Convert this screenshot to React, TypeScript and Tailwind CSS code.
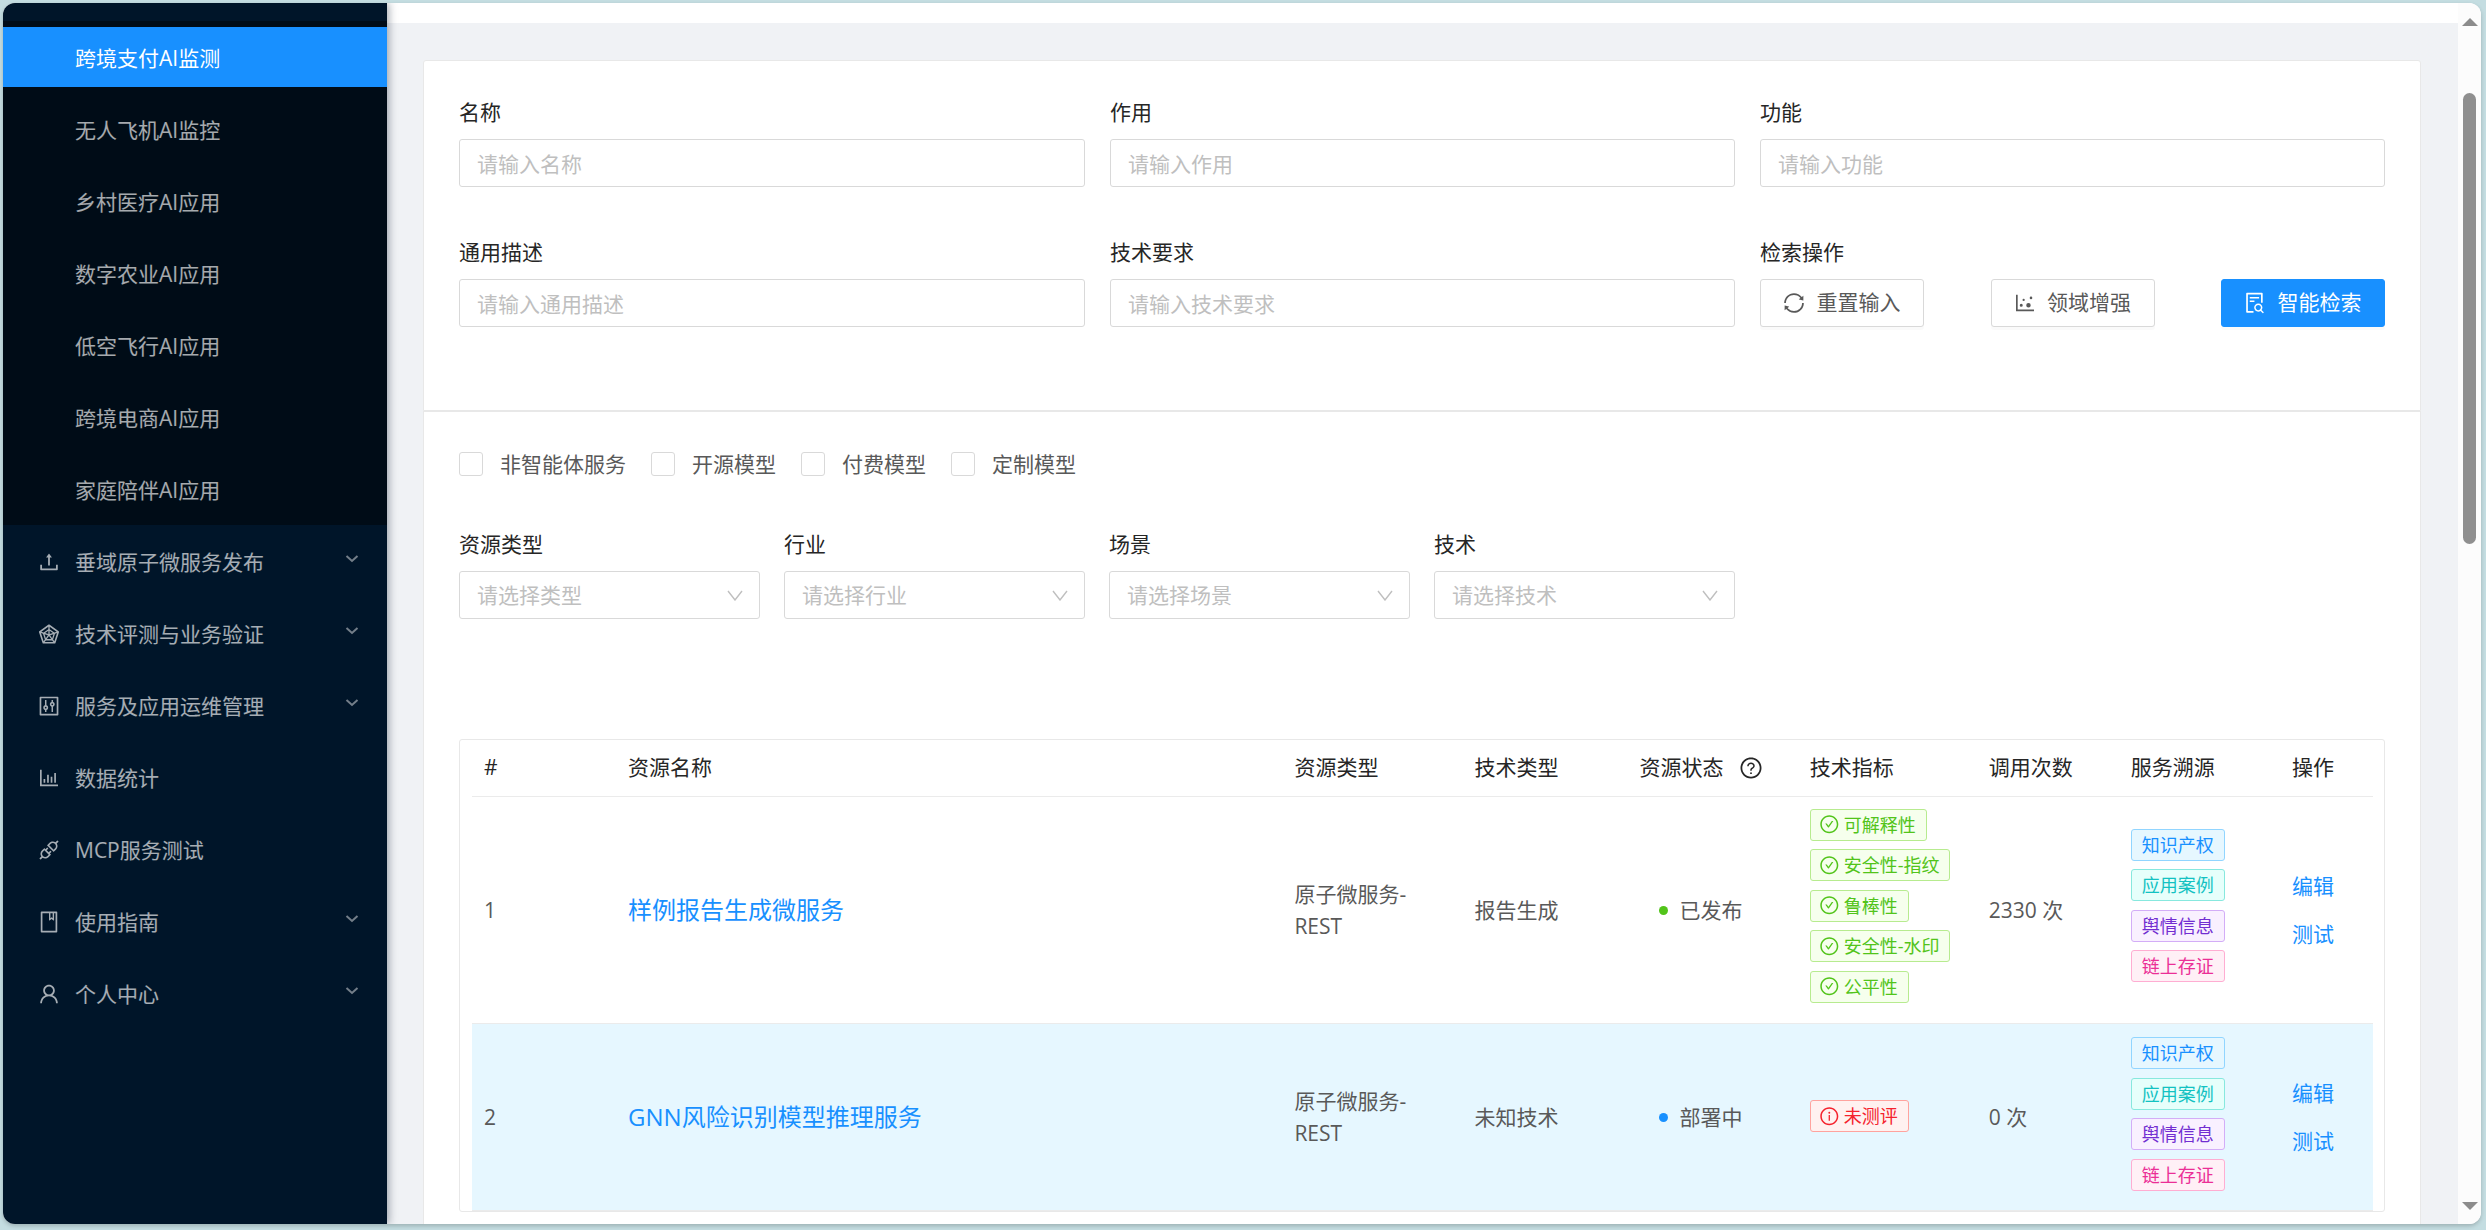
import React from "react";
import {
  AiOutlineUpload,
  AiOutlineRadarChart,
  AiOutlineControl,
  AiOutlineBarChart,
  AiOutlineApi,
  AiOutlineBook,
  AiOutlineUser,
  AiOutlineSync,
  AiOutlineDotChart,
  AiOutlineFileSearch,
  AiOutlineCheckCircle,
  AiOutlineInfoCircle,
  AiOutlineQuestionCircle,
} from "react-icons/ai";

const big = "-m-[1.5px] shrink-0";
const small = "-m-[1.3px] shrink-0";

const subItems = ["无人飞机AI监控", "乡村医疗AI应用", "数字农业AI应用", "低空飞行AI应用", "跨境电商AI应用", "家庭陪伴AI应用"];

const topItems: { label: string; icon: React.ReactNode; arrow: boolean }[] = [
  { label: "垂域原子微服务发布", icon: <AiOutlineUpload size={24} className={big} />, arrow: true },
  { label: "技术评测与业务验证", icon: <AiOutlineRadarChart size={24} className={big} />, arrow: true },
  { label: "服务及应用运维管理", icon: <AiOutlineControl size={24} className={big} />, arrow: true },
  { label: "数据统计", icon: <AiOutlineBarChart size={24} className={big} />, arrow: false },
  { label: "MCP服务测试", icon: <AiOutlineApi size={24} className={big} />, arrow: false },
  { label: "使用指南", icon: <AiOutlineBook size={24} className={big} />, arrow: true },
  { label: "个人中心", icon: <AiOutlineUser size={24} className={big} />, arrow: true },
];

function Chevron() {
  return (
    <svg width="14" height="8" viewBox="0 0 14 8" className="mb-[6px] text-white/45" fill="none" stroke="currentColor" strokeWidth="2">
      <path d="M1.5 1 L7 6 L12.5 1" />
    </svg>
  );
}

function Sidebar() {
  return (
    <aside className="relative z-10 flex h-full w-[384px] shrink-0 flex-col bg-[#001529] text-[21px] leading-[31px] text-white/65 shadow-[2px_0_8px_rgba(0,21,41,0.35)]">
      <div className="h-[18px] shrink-0" />
      <div className="flex flex-col gap-[12px] bg-[#000c17] pb-[6px] pt-[6px]">
        <div className="flex h-[60px] items-center bg-[#1890ff] pl-[72px] pt-[2px] text-white">跨境支付AI监测</div>
        {subItems.map((s) => (
          <div key={s} className="flex h-[60px] items-center pl-[72px] pt-[2px]">
            {s}
          </div>
        ))}
      </div>
      <div className="mt-[6px] flex flex-col gap-[12px]">
        {topItems.map((t) => (
          <div key={t.label} className="flex h-[60px] items-center pl-[35px] pr-[28px] pt-[2px]">
            <span className="mr-[16px] flex w-[21px] justify-center">{t.icon}</span>
            <span className="flex-1">{t.label}</span>
            {t.arrow && <Chevron />}
          </div>
        ))}
      </div>
    </aside>
  );
}

function Field({ label, placeholder }: { label: string; placeholder: string }) {
  return (
    <div className="flex flex-col">
      <label className="mb-[11px] h-[32px] text-[21px] leading-[32px] text-[#262626]">{label}</label>
      <input
        readOnly
        placeholder={placeholder}
        className="h-[48px] w-full rounded-[3px] border border-[#d9d9d9] bg-white px-[17px] pt-[2px] text-[21px] outline-none placeholder:text-[#bfbfbf]"
      />
    </div>
  );
}

function SelectField({ label, placeholder }: { label: string; placeholder: string }) {
  return (
    <div className="flex w-[301px] flex-col">
      <label className="mb-[11px] h-[32px] text-[21px] leading-[32px] text-[#262626]">{label}</label>
      <div className="flex h-[48px] items-center justify-between rounded-[3px] border border-[#d9d9d9] bg-white pl-[17px] pr-[16px] text-[21px] text-[#bfbfbf]">
        <span className="pt-[2px]">{placeholder}</span>
        <svg width="16" height="11" viewBox="0 0 16 11" fill="none" stroke="#bfbfbf" strokeWidth="1.4">
          <path d="M1 1 L8 10 L15 1" />
        </svg>
      </div>
    </div>
  );
}

function Btn({ icon, label, primary }: { icon: React.ReactNode; label: string; primary?: boolean }) {
  return (
    <button
      className={
        "flex h-[48px] w-[164px] items-center justify-center gap-[12px] rounded-[3px] border text-[21px] shadow-[0_3px_0_rgba(0,0,0,0.02)] " +
        (primary ? "border-[#1890ff] bg-[#1890ff] text-white" : "border-[#d9d9d9] bg-white text-[#595959]")
      }
    >
      {icon}
      {label}
    </button>
  );
}

function Check({ label }: { label: string }) {
  return (
    <div className="flex items-center gap-[17px] text-[21px] leading-[24px] text-[#595959]">
      <span className="h-[24px] w-[24px] rounded-[3px] border border-[#d9d9d9] bg-white" />
      {label}
    </div>
  );
}

const tagStyles = {
  green: "bg-[#f6ffed] border-[#b7eb8f] text-[#52c41a]",
  blue: "bg-[#e6f7ff] border-[#91d5ff] text-[#1890ff]",
  cyan: "bg-[#e6fffb] border-[#87e8de] text-[#13c2c2]",
  purple: "bg-[#f9f0ff] border-[#d3adf7] text-[#722ed1]",
  magenta: "bg-[#fff0f6] border-[#ffadd2] text-[#eb2f96]",
  red: "bg-[#fff1f0] border-[#ffa39e] text-[#f5222d]",
};

function Tag({ color, icon, children }: { color: keyof typeof tagStyles; icon?: React.ReactNode; children: React.ReactNode }) {
  return (
    <span className={"inline-flex h-[32px] w-fit items-center gap-[5px] rounded-[3px] border pl-[10px] pr-[10px] text-[18px] leading-[30px] " + tagStyles[color]}>
      {icon}
      {children}
    </span>
  );
}

function TraceTags() {
  return (
    <div className="flex flex-col gap-[8.5px]">
      <Tag color="blue">知识产权</Tag>
      <Tag color="cyan">应用案例</Tag>
      <Tag color="purple">舆情信息</Tag>
      <Tag color="magenta">链上存证</Tag>
    </div>
  );
}

function Ops() {
  return (
    <div className="flex flex-col text-[21px] leading-[48px] text-[#1890ff]">
      <span>编辑</span>
      <span>测试</span>
    </div>
  );
}

const colWidths = ["w-[144px]", "w-[666px]", "w-[180px]", "w-[165px]", "w-[170px]", "w-[179px]", "w-[142px]", "w-[161px]", "w-[93px]"];

function Th({ children }: { children: React.ReactNode }) {
  return <th className="border-b border-[#ebebeb] pl-[12px] text-left align-middle font-normal text-[#262626]">{children}</th>;
}

function Td({ children }: { children: React.ReactNode }) {
  return <td className="border-b border-[#ebebeb] pl-[12px] align-middle">{children}</td>;
}

function Txt({ children }: { children: React.ReactNode }) {
  return <td className="border-b border-[#ebebeb] pl-[12px] pt-[2px] align-middle">{children}</td>;
}

function ResourceTable() {
  const ok = <AiOutlineCheckCircle size={20.6} className={small} />;
  return (
    <div className="rounded-[3px] border border-[#e8e8e8] pl-[12px] pr-[11px]">
      <table className="w-[1901px] table-fixed text-[21px] leading-[31.5px] text-[#595959]">
        <colgroup>
          {colWidths.map((c) => (
            <col key={c} className={c} />
          ))}
        </colgroup>
        <thead>
          <tr className="h-[56px]">
            <Th>#</Th>
            <Th>资源名称</Th>
            <Th>资源类型</Th>
            <Th>技术类型</Th>
            <Th>
              <span className="flex items-center gap-[17px]">
                资源状态
                <AiOutlineQuestionCircle size={24} className={big} />
              </span>
            </Th>
            <Th>技术指标</Th>
            <Th>调用次数</Th>
            <Th>服务溯源</Th>
            <Th>操作</Th>
          </tr>
        </thead>
        <tbody>
          <tr className="h-[227px]">
            <Txt>1</Txt>
            <Txt>
              <span className="text-[24px] text-[#1890ff]">样例报告生成微服务</span>
            </Txt>
            <Txt>
              原子微服务-
              <br />
              REST
            </Txt>
            <Txt>报告生成</Txt>
            <Txt>
              <span className="flex items-center gap-[12px] pl-[19px]">
                <span className="h-[9px] w-[9px] rounded-full bg-[#52c41a]" />
                已发布
              </span>
            </Txt>
            <Td>
              <div className="flex flex-col gap-[8.5px] pb-[8px]">
                <Tag color="green" icon={ok}>可解释性</Tag>
                <Tag color="green" icon={ok}>安全性-指纹</Tag>
                <Tag color="green" icon={ok}>鲁棒性</Tag>
                <Tag color="green" icon={ok}>安全性-水印</Tag>
                <Tag color="green" icon={ok}>公平性</Tag>
              </div>
            </Td>
            <Txt>2330 次</Txt>
            <Td>
              <div className="pb-[8px]">
                <TraceTags />
              </div>
            </Td>
            <Td>
              <Ops />
            </Td>
          </tr>
          <tr className="h-[187px] bg-[#e6f7ff]">
            <Txt>2</Txt>
            <Txt>
              <span className="text-[24px] text-[#1890ff]">GNN风险识别模型推理服务</span>
            </Txt>
            <Txt>
              原子微服务-
              <br />
              REST
            </Txt>
            <Txt>未知技术</Txt>
            <Txt>
              <span className="flex items-center gap-[12px] pl-[19px]">
                <span className="h-[9px] w-[9px] rounded-full bg-[#1890ff]" />
                部署中
              </span>
            </Txt>
            <Td>
              <div className="pt-[2px]">
                <Tag color="red" icon={<AiOutlineInfoCircle size={20.6} className={small} />}>未测评</Tag>
              </div>
            </Td>
            <Txt>0 次</Txt>
            <Td>
              <div className="pb-[5px]">
                <TraceTags />
              </div>
            </Td>
            <Td>
              <Ops />
            </Td>
          </tr>
        </tbody>
      </table>
    </div>
  );
}

function Scrollbar() {
  return (
    <div className="flex h-full w-[23px] shrink-0 flex-col items-center bg-[#fcfcfc] pb-[14px] pt-[15px]">
      <svg width="16" height="8" viewBox="0 0 16 8" fill="#8c8c8c">
        <path d="M8 0 L16 8 L0 8 Z" />
      </svg>
      <div className="mt-[67px] h-[451px] w-[13px] rounded-full bg-[#8f8f8f]" />
      <div className="flex-1" />
      <svg width="16" height="8" viewBox="0 0 16 8" fill="#8c8c8c">
        <path d="M8 8 L16 0 L0 0 Z" />
      </svg>
    </div>
  );
}

export default function App() {
  return (
    <div className="h-[1230px] w-[2486px] overflow-hidden bg-[#c4dde1] pb-[6px] pl-[3px] pr-[5px] pt-[3px] font-['Open_Sans','Noto_Sans_CJK_SC',sans-serif]">
      <div className="flex h-[1221px] w-[2478px] overflow-hidden rounded-[12px] bg-white shadow-[0_2px_4px_rgba(0,0,0,0.2)]">
        <Sidebar />
        <main className="flex h-full min-w-0 flex-1 flex-col overflow-hidden">
          <div className="h-[20px] shrink-0 bg-white" />
          <div className="flex-1 overflow-hidden bg-[#f0f2f5] pl-[36px] pr-[37px] pt-[37px]">
            <section className="h-[351px] rounded-t-[3px] border border-[#e8e8e8] bg-white pl-[35px] pr-[35px] pt-[35px]">
              <div className="grid grid-cols-[626px_625px_625px] gap-x-[25px] gap-y-[49px]">
                <Field label="名称" placeholder="请输入名称" />
                <Field label="作用" placeholder="请输入作用" />
                <Field label="功能" placeholder="请输入功能" />
                <Field label="通用描述" placeholder="请输入通用描述" />
                <Field label="技术要求" placeholder="请输入技术要求" />
                <div className="flex flex-col">
                  <label className="mb-[11px] h-[32px] text-[21px] leading-[32px] text-[#262626]">检索操作</label>
                  <div className="flex justify-between">
                    <Btn icon={<AiOutlineSync size={24} className={big} />} label="重置输入" />
                    <Btn icon={<AiOutlineDotChart size={24} className={big} />} label="领域增强" />
                    <Btn primary icon={<AiOutlineFileSearch size={24} className={big} />} label="智能检索" />
                  </div>
                </div>
              </div>
            </section>
            <section className="h-[900px] border-x border-t border-[#e8e8e8] bg-white pl-[35px] pr-[35px] pt-[40px]">
              <div className="flex gap-[25px]">
                <Check label="非智能体服务" />
                <Check label="开源模型" />
                <Check label="付费模型" />
                <Check label="定制模型" />
              </div>
              <div className="mt-[52px] flex gap-[24px]">
                <SelectField label="资源类型" placeholder="请选择类型" />
                <SelectField label="行业" placeholder="请选择行业" />
                <SelectField label="场景" placeholder="请选择场景" />
                <SelectField label="技术" placeholder="请选择技术" />
              </div>
              <div className="mt-[120px]">
                <ResourceTable />
              </div>
            </section>
          </div>
        </main>
        <Scrollbar />
      </div>
    </div>
  );
}
